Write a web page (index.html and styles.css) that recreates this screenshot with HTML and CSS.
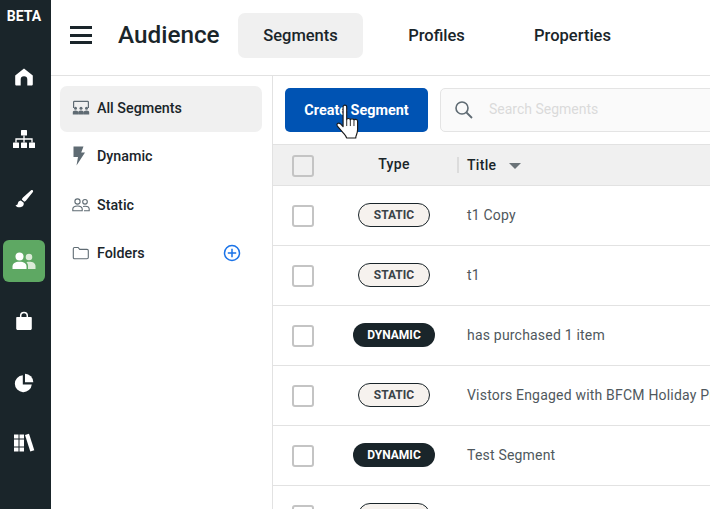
FILE: index.html
```html
<!DOCTYPE html>
<html lang="en">
<head>
<meta charset="utf-8">
<title>Audience</title>
<link rel="stylesheet" href="styles.css">
</head>
<body>
<div class="app">
  <nav class="rail">
    <div class="beta">BETA</div>
    <a class="rail-item"><svg width="20" height="20" viewBox="0 0 20 20"><path fill="#fff" d="M10 1.500 1.200 8.500v8.700c0 .8.600 1.300 1.300 1.300h4.200v-6a3.300 3.300 0 0 1 6.600 0v6h4.200c.7 0 1.300-.5 1.300-1.300V8.500z"/></svg></a>
    <a class="rail-item"><svg width="24" height="20" viewBox="0 0 24 20"><g fill="#fff"><rect x="9" y="1" width="6" height="5.500" rx=".6"/><rect x="1" y="13.500" width="6" height="5.500" rx=".6"/><rect x="9" y="13.500" width="6" height="5.500" rx=".6"/><rect x="17" y="13.500" width="6" height="5.500" rx=".6"/></g><path fill="none" stroke="#fff" stroke-width="1.300" d="M12 6.500v7M4 13.500V10h16v3.500"/></svg></a>
    <a class="rail-item"><svg width="20" height="20" viewBox="0 0 20 20"><path fill="#fff" d="M18.600 1.200c-.5-.4-1-.3-1.500.1L9 8.500c-.6.600-1 1.300-1.200 2l2.500 2.200c.7-.3 1.300-.7 1.800-1.300l6.800-8.400c.4-.6.200-1.400-.3-1.800zM6.800 11.600c-2 .3-2.700 1.500-3 3-.2 1-.8 1.600-2.300 1.800 1.200 1.700 3.400 2.300 5.500 1.700 2.200-.6 3.100-2.300 2.700-4.300z"/></svg></a>
    <a class="rail-item active"><svg width="24" height="18" viewBox="0 0 24 18"><g fill="#fff"><circle cx="7.500" cy="4.500" r="4"/><path d="M.5 17v-2.500C.5 11.500 3 9.800 7.500 9.800s7 1.700 7 4.700V17z"/></g><g fill="#dcebd9"><circle cx="17" cy="5" r="3.300"/><path d="M16 17v-3c0-1.500-.5-2.800-1.600-3.700 1-.4 1.900-.5 2.800-.5 3.800 0 6.300 1.500 6.300 4.200v3z"/></g></svg></a>
    <a class="rail-item"><svg width="18" height="20" viewBox="0 0 18 20"><path fill="#fff" d="M2 6h14c.5 0 .8.300.8.800v10.700c0 .9-.7 1.500-1.500 1.500H2.700c-.8 0-1.500-.6-1.500-1.500V6.800c0-.5.300-.8.800-.8z"/><path fill="none" stroke="#fff" stroke-width="1.500" d="M5.700 9V4.700a3.300 3.300 0 0 1 6.600 0V9"/></svg></a>
    <a class="rail-item"><svg width="20" height="20" viewBox="0 0 20 20"><path fill="#fff" d="M8.800 2.200a8.500 8.500 0 1 0 9 9.300H8.800z"/><path fill="#fff" d="M11 .8v8.500h8.300A8.500 8.500 0 0 0 11 .8z"/></svg></a>
    <a class="rail-item"><svg width="22" height="20" viewBox="0 0 22 20"><g fill="#fff"><rect x="1" y="1.500" width="4.500" height="17"/><rect x="6.500" y="1.500" width="4.500" height="17"/><path d="m12 2 4-1.300 5.300 16.600-4 1.300z"/></g><path stroke="#1a252a" stroke-width="1" d="M1 6h10M1 14h10"/></svg></a>
  </nav>
  <div class="content">
    <header class="topbar">
      <button class="menu" aria-label="Menu"><span></span><span></span><span></span></button>
      <h1 class="page-title">Audience</h1>
      <div class="tabs">
        <a class="tab selected">Segments</a>
        <a class="tab">Profiles</a>
        <a class="tab">Properties</a>
      </div>
    </header>
    <div class="body">
      <aside class="side">
        <a class="side-item selected">
          <svg class="side-icon" width="18" height="16" viewBox="0 0 18 16"><path fill="none" stroke="#5f6b73" stroke-width="1.200" d="M1.600 8V2.200c0-.5.300-.8.800-.8h13.200c.5 0 .8.300.8.800V8"/><g fill="#5f6b73"><circle cx="3.500" cy="8.300" r="1.500"/><circle cx="9" cy="8.300" r="1.500"/><circle cx="14.500" cy="8.300" r="1.500"/><path d="M.8 14.600v-2.300c0-1 .9-1.800 2.700-1.800s2.700.8 2.700 1.800v2.300zM6.300 14.600v-2.300c0-1 .9-1.800 2.700-1.800s2.700.8 2.700 1.800v2.300zM11.800 14.600v-2.300c0-1 .9-1.800 2.700-1.800s2.700.8 2.700 1.800v2.300z"/></g></svg>
          <span>All Segments</span>
        </a>
        <a class="side-item">
          <svg class="side-icon" width="18" height="20" viewBox="0 0 18 20"><path fill="#5f6b73" d="M1.500.5h10L9.200 6.500h3.800L4.500 19.500 6 11H1.500z"/></svg>
          <span>Dynamic</span>
        </a>
        <a class="side-item">
          <svg class="side-icon" width="18" height="14" viewBox="0 0 18 14"><g fill="none" stroke="#5f6b73" stroke-width="1.100"><circle cx="5.500" cy="3.500" r="2.600"/><path d="M.8 12.800v-1.700c0-2 2-3.100 4.700-3.100s4.700 1.100 4.700 3.100v1.700z"/><circle cx="13" cy="3.800" r="2.300"/><path d="M12 12.800h5.200v-1.700c0-1.900-1.700-2.900-4-2.900-.8 0-1.500.1-2.100.3"/></g></svg>
          <span>Static</span>
        </a>
        <a class="side-item">
          <svg class="side-icon" width="18" height="14" viewBox="0 0 18 14"><path fill="none" stroke="#5f6b73" stroke-width="1.100" d="M1.300 2.800c0-.7.500-1.300 1.200-1.300h3.600l1.600 1.900h7.300c.8 0 1.300.5 1.300 1.200v6.900c0 .7-.5 1.200-1.300 1.200H2.500c-.7 0-1.200-.5-1.200-1.200z"/></svg>
          <span class="grow">Folders</span>
          <svg class="add" width="18" height="18" viewBox="0 0 18 18"><circle cx="9" cy="9" r="7.500" fill="none" stroke="#1a73e8" stroke-width="1.500"/><path stroke="#1a73e8" stroke-width="1.500" d="M9 4.800v8.400M4.800 9h8.400"/></svg>
        </a>
      </aside>
      <main class="main">
        <div class="toolbar">
          <button class="create">Create Segment</button>
          <label class="search">
            <svg width="20" height="20" viewBox="0 0 20 20"><circle cx="8" cy="8" r="6" fill="none" stroke="#5f6b73" stroke-width="1.600"/><path stroke="#5f6b73" stroke-width="1.800" d="m12.500 12.500 5.500 5.500"/></svg>
            <span class="search-text">Search Segments</span>
          </label>
        </div>
        <div class="table">
          <div class="row head">
            <span class="cell-check"><i class="check head-check"></i></span>
            <span class="cell-type"><b>Type</b></span>
            <span class="cell-title"><b>Title</b><i class="caret"></i></span>
          </div>
          <div class="row"><span class="cell-check"><i class="check"></i></span><span class="cell-type"><em class="pill static">STATIC</em></span><span class="cell-title">t1 Copy</span></div>
          <div class="row"><span class="cell-check"><i class="check"></i></span><span class="cell-type"><em class="pill static">STATIC</em></span><span class="cell-title">t1</span></div>
          <div class="row"><span class="cell-check"><i class="check"></i></span><span class="cell-type"><em class="pill dynamic">DYNAMIC</em></span><span class="cell-title">has purchased 1 item</span></div>
          <div class="row"><span class="cell-check"><i class="check"></i></span><span class="cell-type"><em class="pill static">STATIC</em></span><span class="cell-title">Vistors Engaged with BFCM Holiday Promotion</span></div>
          <div class="row"><span class="cell-check"><i class="check"></i></span><span class="cell-type"><em class="pill dynamic">DYNAMIC</em></span><span class="cell-title">Test Segment</span></div>
          <div class="row"><span class="cell-check"><i class="check"></i></span><span class="cell-type"><em class="pill static">STATIC</em></span><span class="cell-title"></span></div>
        </div>
      </main>
    </div>
  </div>
</div>
<svg class="cursor" width="26" height="35" viewBox="0 0 20 27"><path fill="#fff" stroke="#1a1a1a" stroke-width=".9" stroke-linejoin="round" d="M6.200 2.200c0-1.700 2.800-1.700 2.800 0v9.800c0-1 2.600-1.300 2.800.2.100-1 2.600-1.200 2.800.3.300-.9 2.700-.9 2.800.6v6.600c0 2.300-.6 3.400-1.100 4.700-.3.800-.3 1.200-.3 1.800H8.900c-.4-1.800-1.500-2.600-2.800-4.200L1.800 17c-1.100-1.600.7-3 2.300-1.800l2.100 2.200z"/><path stroke="#1a1a1a" stroke-width=".7" d="M9 12v5M11.800 12.400V17M14.600 13v4"/></svg>
</body>
</html>
```
FILE: styles.css
```css
* { box-sizing: border-box; }
html, body { margin: 0; padding: 0; width: 710px; height: 509px; overflow: hidden; background: #fff; }
body { font-family: Roboto, "Liberation Sans", sans-serif; color: #1a252a; position: relative; }
.app { display: flex; width: 710px; height: 509px; overflow: hidden; }

.rail { width: 51px; flex: none; background: #1a252a; display: flex; flex-direction: column; padding: 8px 0 0 3px; }
.beta { color: #fff; font-size: 14px; font-weight: 700; line-height: 16px; height: 16px; width: 42px; text-align: center; margin-bottom: 32px; }
.rail-item { width: 42px; height: 42px; flex: none; margin-bottom: 18px; display: flex; align-items: center; justify-content: center; border-radius: 6px; }
.rail-item:nth-child(even) { margin-bottom: 20px; }
.rail-item.active { background: #5ea863; }

.content { flex: 1; min-width: 0; display: flex; flex-direction: column; }
.topbar { height: 76px; flex: none; border-bottom: 1px solid #e2e2e2; display: flex; align-items: flex-start; padding: 13px 0 0 19px; }
.menu { width: 22px; height: 18px; margin: 13px 26px 0 0; padding: 0; border: 0; background: none; display: flex; flex-direction: column; justify-content: space-between; }
.menu span { display: block; height: 3px; background: #1a252a; }
.page-title { margin: 6px 19px 0 0; font-size: 24.300px; line-height: 32px; font-weight: 500; width: 101px; white-space: nowrap; }
.tabs { display: flex; gap: 11px; }
.tab { height: 45px; width: 125px; display: flex; align-items: center; justify-content: center; border-radius: 7px; font-size: 16.500px; font-weight: 500; color: #1a252a; }
.tab.selected { background: #f0f0f0; }

.body { flex: 1; display: flex; min-height: 0; }
.side { width: 222px; flex: none; border-right: 1px solid #e2e2e2; padding: 10px 10px 0 9px; display: flex; flex-direction: column; gap: 2px; }
.side-item { height: 46px; display: flex; align-items: center; padding: 0 0 2px 12px; border-radius: 7px; font-size: 14.300px; font-weight: 500; color: #1a252a; }
.side-item:nth-child(n+3) { padding-bottom: 0; }
.side-item.selected { background: #f0f0f0; }
.side-icon { width: 18px; margin-right: 7px; flex: none; }
.grow { flex: 1; }
.add { margin-right: 21px; }

.main { flex: 1; min-width: 0; overflow: hidden; }
.toolbar { display: flex; gap: 12px; padding: 12px 0 0 12px; height: 68px; }
.create { width: 143px; height: 44px; flex: none; border: 0; border-radius: 5px; background: #0053b3; color: #fff; font: 700 14.400px Roboto, "Liberation Sans", sans-serif; }
.search { width: 300px; height: 44px; flex: none; border: 1px solid #e4e4e4; border-radius: 5px; background: #fafafa; display: flex; align-items: center; padding-left: 13px; gap: 15px; color: #dadada; font-size: 14px; }
.search-text { margin-top: -2px; }

.table { width: 437px; }
.row { height: 60px; display: flex; align-items: center; border-bottom: 1px solid #e2e2e2; font-size: 14px; color: #4f585d; letter-spacing: .2px; white-space: nowrap; }
.row.head { height: 42px; background: #f0f0f0; border-top: 1px solid #e2e2e2; color: #1a252a; }
.row.head b { font-weight: 500; font-size: 14px; letter-spacing: .3px; }
.cell-check { width: 59px; flex: none; padding-left: 19px; display: flex; }
.check { display: block; width: 22px; height: 22px; border: 2px solid #c4c4c4; border-radius: 3px; background: #fff; }
.head-check { background: #f0f0f0; margin-top: 2px; }
.cell-type { width: 125px; flex: none; display: flex; justify-content: center; padding-right: 1px; padding-bottom: 1px; }
.row.head .cell-type { padding-bottom: 2px; }
.row.head .cell-title { border-left: 2px solid #dcdcdc; height: 16px; padding: 0 0 1px 8px; display: flex; align-items: center; }
.cell-title { padding: 0 0 2px 10px; }
.caret { display: block; width: 0; height: 0; margin-left: 13px; margin-top: 2px; border: 6px solid transparent; border-top: 6px solid #6a7378; border-bottom: 0; }
.pill { display: flex; align-items: center; justify-content: center; height: 24px; border-radius: 12px; font-style: normal; font-size: 12px; font-weight: 700; letter-spacing: 0; }
.pill.static { width: 72px; border: 1px solid #1a252a; background: #f6f2ee; color: #3a4348; }
.pill.dynamic { width: 82px; background: #1a252a; color: #fff; }

.cursor { position: absolute; left: 335px; top: 104px; }
```
